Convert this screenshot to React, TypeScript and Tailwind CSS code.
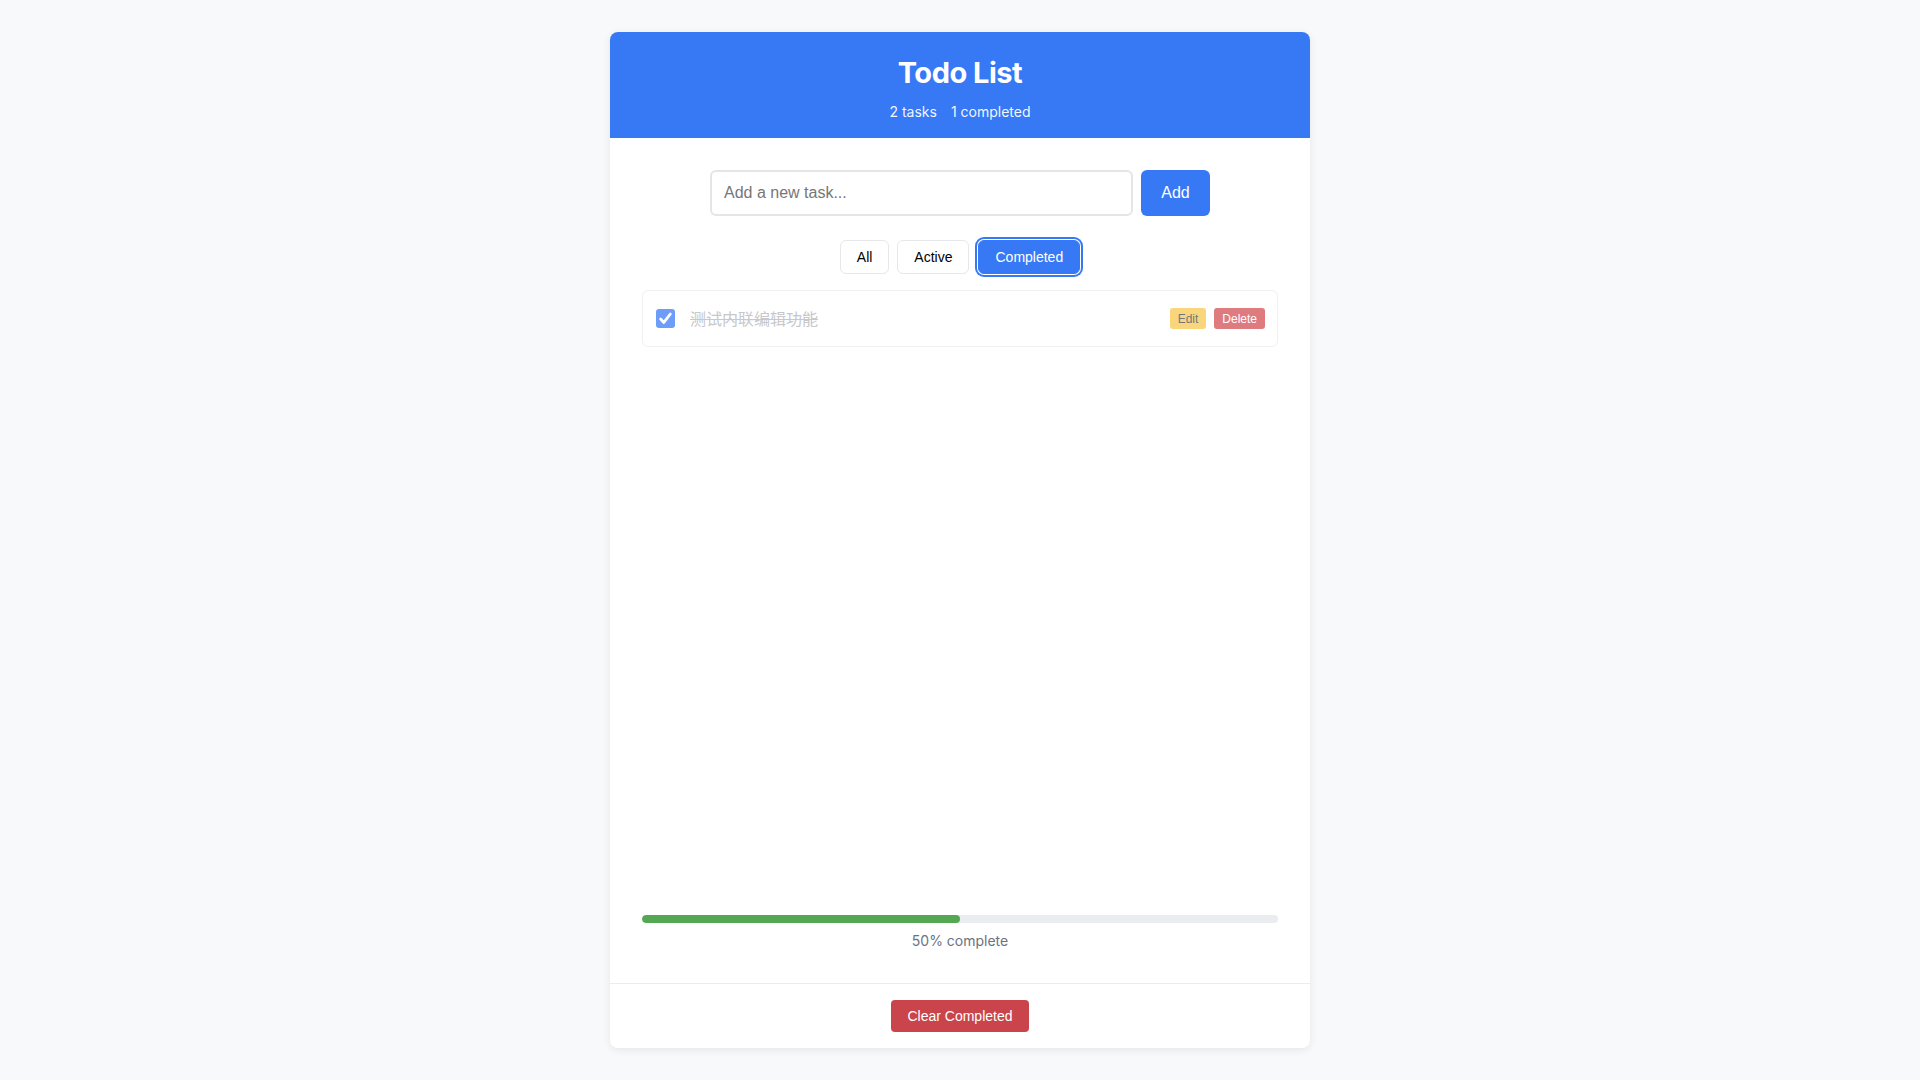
import { useState } from 'react';

interface Todo {
  id: number;
  text: string;
  completed: boolean;
}

const initialTodos: Todo[] = [
  { id: 1, text: '学习 React', completed: false },
  { id: 2, text: '测试内联编辑功能', completed: true },
];

const filters = ['All', 'Active', 'Completed'];

const App = () => {
  const [todos, setTodos] = useState<Todo[]>(initialTodos);
  const [filter, setFilter] = useState<string>('Completed');
  const [input, setInput] = useState('');

  const completedCount = todos.filter(t => t.completed).length;
  const percent = todos.length ? Math.round((completedCount / todos.length) * 100) : 0;

  const visible = todos.filter(t =>
    filter === 'All' ? true : filter === 'Active' ? !t.completed : t.completed
  );

  const addTodo = () => {
    if (!input.trim()) return;
    setTodos(prev => [...prev, { id: Date.now(), text: input.trim(), completed: false }]);
    setInput('');
  };

  const toggle = (id: number) =>
    setTodos(prev => prev.map(t => (t.id === id ? { ...t, completed: !t.completed } : t)));

  const remove = (id: number) => setTodos(prev => prev.filter(t => t.id !== id));

  return (
    <div className="min-h-screen bg-[#f8f9fa] py-8 font-['Inter',sans-serif]">
      <div className="mx-auto flex h-[1016px] w-[700px] flex-col overflow-hidden rounded-lg bg-white shadow-[0_2px_8px_rgba(0,0,0,0.08)]">
        {/* Header */}
        <div className="bg-[#3779f5] pt-[23px] pb-4 text-center text-white">
          <h1 className="text-[29px] leading-[36px] font-bold tracking-[-0.5px]">Todo List</h1>
          <div className="mt-[11px] flex justify-center gap-[14px] text-sm leading-5 text-white/95">
            <span>{todos.length} tasks</span>
            <span>{completedCount} completed</span>
          </div>
        </div>

        {/* Body */}
        <div className="flex flex-1 flex-col px-8 pt-8 pb-8">
          <div className="mx-auto flex w-[500px] gap-2 font-['Liberation_Sans',Arial,sans-serif]">
            <input
              value={input}
              onChange={e => setInput(e.target.value)}
              onKeyDown={e => e.key === 'Enter' && addTodo()}
              placeholder="Add a new task..."
              className="h-[46px] flex-1 rounded-md border-2 border-[#e3e5e8] px-3 text-base text-gray-800 outline-none placeholder:text-[#767676]"
            />
            <button
              onClick={addTodo}
              className="h-[46px] w-[69px] rounded-md bg-[#3779f5] text-base text-white"
            >
              Add
            </button>
          </div>

          <div className="mt-6 flex justify-center gap-2 font-['Liberation_Sans',Arial,sans-serif]">
            {filters.map(f => (
              <button
                key={f}
                onClick={() => setFilter(f)}
                className={`h-[34px] rounded-md border px-4 text-sm ${
                  filter === f
                    ? 'ml-px border-[#3779f5] bg-[#3779f5] text-white ring-2 ring-[#3779f5] ring-offset-1'
                    : 'border-[#e5e7eb] bg-white text-black'
                }`}
              >
                {f}
              </button>
            ))}
          </div>

          {/* List */}
          <div className="mt-4 flex-1">
            {visible.map(todo => (
              <div
                key={todo.id}
                className="flex h-[57px] items-center rounded-md border border-[#f0f1f3] pr-3 pl-[13px]"
              >
                <button
                  onClick={() => toggle(todo.id)}
                  className={`flex h-[19px] w-[19px] shrink-0 items-center justify-center rounded-[3px] ${
                    todo.completed ? 'bg-[#6d9df8]' : 'border border-gray-400 bg-white'
                  }`}
                >
                  {todo.completed && (
                    <svg width="15" height="15" viewBox="0 0 16 16" fill="none">
                      <path d="M2.8 8.6l3.4 3.6 7-9" stroke="white" strokeWidth="3" strokeLinecap="round" strokeLinejoin="round" />
                    </svg>
                  )}
                </button>
                <span
                  className={`ml-[15px] flex-1 font-['Inter','Noto_Sans_CJK_SC',sans-serif] text-base leading-6 ${
                    todo.completed ? 'text-[#c6c8cc] line-through' : 'text-gray-800'
                  }`}
                >
                  {todo.text}
                </span>
                <div className="flex gap-2 font-['Liberation_Sans',Arial,sans-serif] text-xs">
                  <button className="h-[21px] rounded-[3px] bg-[#f9d67b] px-2 text-[#71767d]">Edit</button>
                  <button
                    onClick={() => remove(todo.id)}
                    className="h-[21px] rounded-[3px] bg-[#dd7b7f] px-2 text-white"
                  >
                    Delete
                  </button>
                </div>
              </div>
            ))}
          </div>

          {/* Progress */}
          <div>
            <div className="h-2 w-full overflow-hidden rounded-full bg-[#ebecef]">
              <div className="h-full rounded-full bg-[#54a854]" style={{ width: `${percent}%` }} />
            </div>
            <p className="mt-2 text-center text-sm leading-5 text-[#6b7280]">{percent}% complete</p>
          </div>
        </div>

        {/* Footer */}
        <div className="flex justify-center border-t border-[#ececec] pt-4 pb-4">
          <button
            onClick={() => setTodos(prev => prev.filter(t => !t.completed))}
            className="h-8 rounded-[4px] bg-[#ca444b] px-4 font-['Liberation_Sans',Arial,sans-serif] text-sm text-white"
          >
            Clear Completed
          </button>
        </div>
      </div>
    </div>
  );
};

export default App;
